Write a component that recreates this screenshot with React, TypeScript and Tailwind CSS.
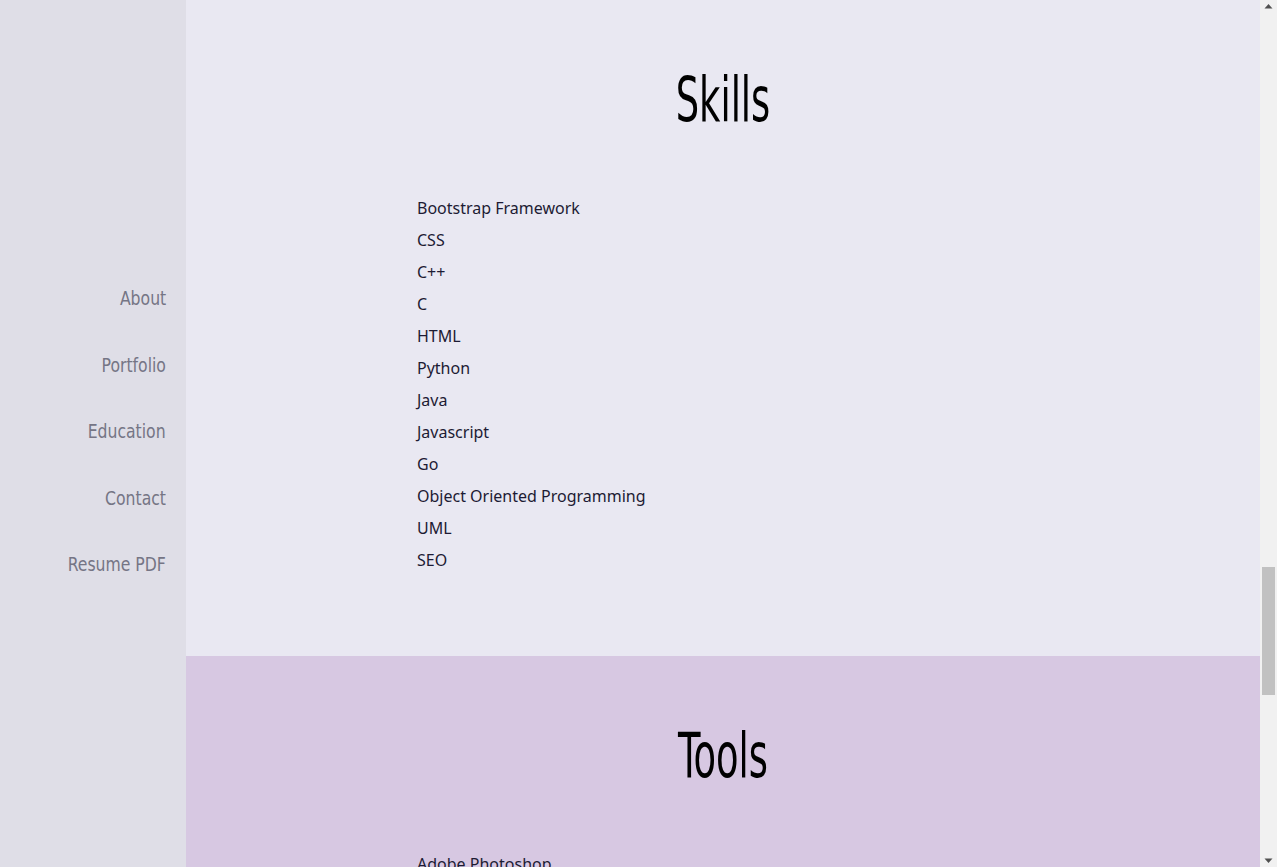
const NAV = ['About', 'Portfolio', 'Education', 'Contact', 'Resume PDF']

const SKILLS = [
  'Bootstrap Framework',
  'CSS',
  'C++',
  'C',
  'HTML',
  'Python',
  'Java',
  'Javascript',
  'Go',
  'Object Oriented Programming',
  'UML',
  'SEO',
]

const TOOLS = ['Adobe Photoshop', 'Adobe Illustrator', 'Figma', 'Git']

const headingFont = { fontFamily: '"DejaVu Sans Condensed", "DejaVu Sans", sans-serif' }

function Section({ title, items, bg }: { title: string; items: string[]; bg: string }) {
  return (
    <section className={`${bg} pt-[70px] pb-[80px]`}>
      <h2
        className="text-center text-[62px] leading-[60px] text-black scale-x-[0.66]"
        style={headingFont}
      >
        {title}
      </h2>
      <ul className="mt-[62px] pl-[231px] font-['Noto_Sans',sans-serif] text-[16px] leading-[32px] text-[#1d1b34]">
        {items.map((s) => (
          <li key={s}>{s}</li>
        ))}
      </ul>
    </section>
  )
}

export default function App() {
  return (
    <div className="flex h-[867px] w-full overflow-hidden">
      {/* Sidebar */}
      <aside className="w-[186px] shrink-0 bg-[#dfdee7]">
        <nav
          className="flex flex-col items-end pr-5 pt-[284px] gap-[37.5px] text-[20px] leading-[29px] text-[#757585]"
          style={{ fontFamily: '"DejaVu Sans Condensed", sans-serif', fontWeight: 300 }}
        >
          {NAV.map((n) => (
            <a key={n} href="#" className="block origin-right scale-x-[0.87]">
              {n}
            </a>
          ))}
        </nav>
      </aside>

      {/* Main */}
      <main className="flex-1 overflow-hidden">
        <Section title="Skills" items={SKILLS} bg="bg-[#e9e8f2]" />
        <Section title="Tools" items={TOOLS} bg="bg-[#d7c8e2]" />
      </main>

      {/* Scrollbar */}
      <div className="flex w-[17px] shrink-0 flex-col items-center bg-[#f1f1f1]">
        <svg width="9" height="17" viewBox="0 0 9 17" className="shrink-0">
          <path d="M0.5 8.5 L4.5 4 L8.5 8.5 Z" fill="#505050" />
        </svg>
        <div className="h-[550px] shrink-0" />
        <div className="h-[128px] w-[13px] shrink-0 bg-[#c1c1c1]" />
        <div className="flex-1" />
        <svg width="9" height="17" viewBox="0 0 9 17" className="shrink-0">
          <path d="M0.5 8.5 L4.5 13 L8.5 8.5 Z" fill="#505050" />
        </svg>
      </div>
    </div>
  )
}
